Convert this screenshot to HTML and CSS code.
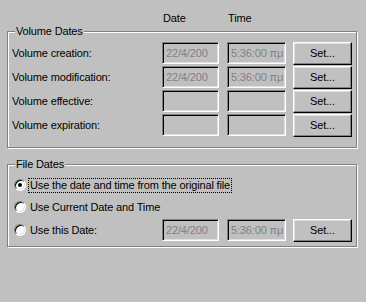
FILE: index.html
```html
<!DOCTYPE html>
<html lang="en">

<head>
    <meta charset="UTF-8">
    <title>Volume Dates</title>
    <link rel="stylesheet" href="styles.css">
</head>

<body>
    <div class="dialog">
        <div class="head">
            <span class="head-date">Date</span>
            <span class="head-time">Time</span>
        </div>

        <div class="group group-volume">
            <span class="legend">Volume Dates</span>
            <div class="row">
                <span class="label">Volume creation:</span>
                <span class="field field-date">22/4/200</span>
                <span class="field field-time">5:36:00 πμ</span>
                <button class="btn">Set...</button>
            </div>
            <div class="row">
                <span class="label">Volume modification:</span>
                <span class="field field-date">22/4/200</span>
                <span class="field field-time">5:36:00 πμ</span>
                <button class="btn">Set...</button>
            </div>
            <div class="row">
                <span class="label">Volume effective:</span>
                <span class="field field-date"></span>
                <span class="field field-time"></span>
                <button class="btn">Set...</button>
            </div>
            <div class="row">
                <span class="label">Volume expiration:</span>
                <span class="field field-date"></span>
                <span class="field field-time"></span>
                <button class="btn">Set...</button>
            </div>
        </div>

        <div class="group group-file">
            <span class="legend">File Dates</span>
            <div class="radio-row">
                <span class="radio checked"></span>
                <span class="radio-label focused">Use the date and time from the original file</span>
            </div>
            <div class="radio-row">
                <span class="radio"></span>
                <span class="radio-label">Use Current Date and Time</span>
            </div>
            <div class="radio-row radio-row-fields">
                <span class="radio"></span>
                <span class="radio-label label-short">Use this Date:</span>
                <span class="field field-date">22/4/200</span>
                <span class="field field-time">5:36:00 πμ</span>
                <button class="btn">Set...</button>
            </div>
        </div>
    </div>
</body>

</html>
```

FILE: styles.css
```css
body {
    margin: 0;
    background-color: #c0c0c0;
    font-family: 'Liberation Sans', Arial, sans-serif;
    font-size: 11px;
    letter-spacing: -0.15px;
    color: #000;
    height: 302px;
}

.dialog {
    padding: 0 9px 0 7px;
}

.head {
    display: flex;
    height: 31px;
    align-items: center;
    padding: 4px 0 0 156px;
    box-sizing: border-box;
}

.head-date {
    width: 65px;
}

/* etched frame, like a win32 group box */
.group {
    border: 1px solid #808080;
    box-shadow: inset 1px 1px 0 #fff, 1px 1px 0 #fff;
    padding-left: 4px;
    box-sizing: border-box;
}

.group-volume {
    height: 117px;
}

.group-file {
    margin-top: 16px;
    height: 83px;
}

.legend {
    display: block;
    width: max-content;
    margin: -7px 0 3px 3px;
    padding: 0 1px;
    background-color: #c0c0c0;
    line-height: 13px;
}

.row {
    display: flex;
    align-items: center;
    height: 24px;
}

.label {
    width: 150px;
}

.field {
    box-sizing: border-box;
    height: 22px;
    border: 1px solid;
    border-color: #808080 #fff #fff #808080;
    box-shadow: inset 1px 1px 0 #000, inset -1px -1px 0 #dfdfdf;
    color: #808080;
    padding: 4px 0 0 3px;
    line-height: 13px;
    overflow: hidden;
    white-space: nowrap;
}

.field-date {
    width: 57px;
    margin-right: 8px;
}

.field-time {
    width: 59px;
    margin-right: 7px;
}

.btn {
    box-sizing: border-box;
    width: 59px;
    height: 23px;
    padding: 0;
    background-color: #c0c0c0;
    border: 1px solid;
    border-color: #fff #000 #000 #fff;
    box-shadow: inset -1px -1px 0 #808080, inset 1px 1px 0 #dfdfdf;
    font-family: inherit;
    font-size: 11px;
    letter-spacing: inherit;
    color: #000;
}

.radio-row {
    display: flex;
    align-items: center;
    height: 22px;
    padding-left: 2px;
}

.radio-row-fields {
    height: 24px;
}

.radio {
    box-sizing: border-box;
    width: 12px;
    height: 12px;
    border-radius: 50%;
    border: 1px solid;
    border-color: #808080 #fff #fff #808080;
    box-shadow: inset 1px 1px 0 #000, inset -1px -1px 0 #dfdfdf;
    background-color: #fff;
    margin-right: 3px;
    display: flex;
    align-items: center;
    justify-content: center;
}

.radio.checked::after {
    content: '';
    width: 4px;
    height: 4px;
    border-radius: 50%;
    background-color: #000;
}

.radio-label {
    padding: 0 1px;
    line-height: 13px;
}

.focused {
    outline: 1px dotted #000;
}

.label-short {
    width: 131px;
}
```
